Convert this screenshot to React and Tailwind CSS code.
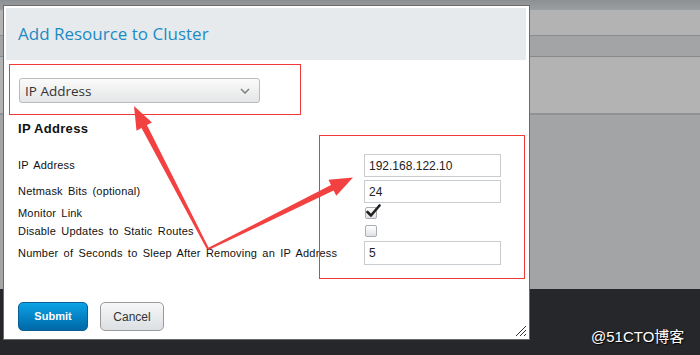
import React from "react";

const labelFont = { fontFamily: '"Liberation Sans", Arial, sans-serif' };

function Row({ label, h, mt, children }) {
  return (
    <div className={`flex items-center ${h} ${mt}`}>
      <div className="w-[346px] text-[11px] text-[#111] tracking-[0.2px] [word-spacing:2px]" style={labelFont}>
        {label}
      </div>
      {children}
    </div>
  );
}

function TextInput({ value }) {
  return (
    <div className="w-[137px] h-full border border-[#c8cdd1] bg-white flex items-center pl-[4px] text-[12px] text-[#222]" style={labelFont}>
      {value}
    </div>
  );
}

function Checkbox({ checked }) {
  return (
    <div className="relative ml-[1px] w-[12px] h-[12px] rounded-[2px] border border-[#a9adb1] bg-gradient-to-b from-[#ffffff] to-[#dfe2e5]">
      {checked && (
        <svg className="absolute -top-[4px] left-[0px]" width="15" height="14" viewBox="0 0 15 14">
          <path d="M1.5 8 L5 11.5 L13.5 1.5" fill="none" stroke="#222" strokeWidth="2.6" strokeLinecap="round" strokeLinejoin="round" />
        </svg>
      )}
    </div>
  );
}

export default function App() {
  return (
    <div className="relative w-[700px] h-[355px] overflow-hidden flex flex-col">
      {/* page behind the dialog */}
      <div className="h-[10px] bg-gradient-to-b from-[#8c9093] to-[#9a9ea1]" />
      <div className="h-[26px] bg-[#b3b3b3] border-b border-[#8b8c8e]" />
      <div className="h-[21px] bg-[#a3a4a6] border-b border-[#87898b]" />
      <div className="h-[58px] bg-[#b3b3b3] border-b-2 border-[#8e9295]" />
      <div className="h-[174px] bg-[#a3a4a6]" />
      <div className="flex-1 bg-[#26272a]" />

      {/* dialog */}
      <div className="absolute left-[3px] top-[5px] w-[527px] h-[335px] bg-white border border-[#6b6b6b] pt-[2px] pl-[2px] pr-[3px] flex flex-col">
        <div className="h-[52px] bg-[#e6eaed] flex items-center pl-[12px]">
          <span className="text-[17px] text-[#1c8ac4] -mt-[1px]" style={{ fontFamily: '"Open Sans", "DejaVu Sans", sans-serif' }}>
            Add Resource to Cluster
          </span>
        </div>

        <div className="px-[12px] flex flex-col">
          <div className="mt-[18px] ml-[1px] w-[241px] h-[25px] rounded-[3px] border border-[#b9bcbf] bg-gradient-to-b from-[#fbfbfb] to-[#e4e5e6] flex items-center justify-between pl-[5px] pr-[9px]">
            <span className="text-[13.5px] text-[#333] mt-[2px]" style={{ fontFamily: '"Open Sans", "DejaVu Sans", sans-serif' }}>
              IP Address
            </span>
            <svg width="10" height="6" viewBox="0 0 10 6">
              <path d="M1 1 L5 5 L9 1" fill="none" stroke="#808080" strokeWidth="1.5" />
            </svg>
          </div>

          <div className="mt-[18px] h-[16px] text-[13px] font-bold text-[#111] leading-[16px] tracking-[0.3px]" style={labelFont}>
            IP Address
          </div>

          <div className="mt-[17px] flex flex-col">
            <Row label="IP Address" h="h-[23px]" mt="mt-0">
              <TextInput value="192.168.122.10" />
            </Row>
            <Row label="Netmask Bits (optional)" h="h-[23px]" mt="mt-[3px]">
              <TextInput value="24" />
            </Row>
            <Row label="Monitor Link" h="h-[18px]" mt="mt-[1px]">
              <Checkbox checked />
            </Row>
            <Row label="Disable Updates to Static Routes" h="h-[18px]" mt="mt-0">
              <Checkbox />
            </Row>
            <Row label="Number of Seconds to Sleep After Removing an IP Address" h="h-[24px]" mt="mt-[1px]">
              <TextInput value="5" />
            </Row>
          </div>

          <div className="mt-[37px] flex gap-[12px]">
            <button className="w-[70px] h-[29px] rounded-[5px] border border-[#0a5f94] bg-gradient-to-b from-[#0ea2e6] to-[#0068a7] text-white text-[11px] font-bold" style={labelFont}>
              Submit
            </button>
            <button className="w-[64px] h-[29px] rounded-[5px] border border-[#9a9a9a] bg-gradient-to-b from-[#f6f7f8] to-[#dcdfe2] text-[#333] text-[12px]" style={labelFont}>
              Cancel
            </button>
          </div>
        </div>

        <svg className="absolute right-[2px] bottom-[2px]" width="12" height="12" viewBox="0 0 12 12">
          <path d="M11 1 L1 11 M11 5 L5 11 M11 9 L9 11" stroke="#333" strokeWidth="1" />
        </svg>
      </div>

      {/* red annotation boxes */}
      <div className="absolute left-[9px] top-[64px] w-[292px] h-[51px] border border-[#f03a3a]" />
      <div className="absolute left-[319px] top-[135px] w-[206px] h-[144px] border border-[#f03a3a]" />

      {/* red arrows */}
      <svg className="absolute left-0 top-0" width="700" height="355" viewBox="0 0 700 355">
        <polygon fill="#f34141" points="209,248.5 146.9,125.1 152,122.5 134,106 136.5,130.8 141.5,127.9 207,249.5" />
        <polygon fill="#f34141" points="207.3,248.3 331,185 328.5,179.8 353,177.5 336.3,195.8 333.6,190.4 208.7,250" />
      </svg>

      {/* watermark */}
      <div className="absolute left-[591px] top-[326px] text-[15px] text-white [text-shadow:1px_1px_1px_#000]" style={{ fontFamily: '"Liberation Sans", "Noto Sans CJK SC", sans-serif' }}>
        @51CTO博客
      </div>
    </div>
  );
}
